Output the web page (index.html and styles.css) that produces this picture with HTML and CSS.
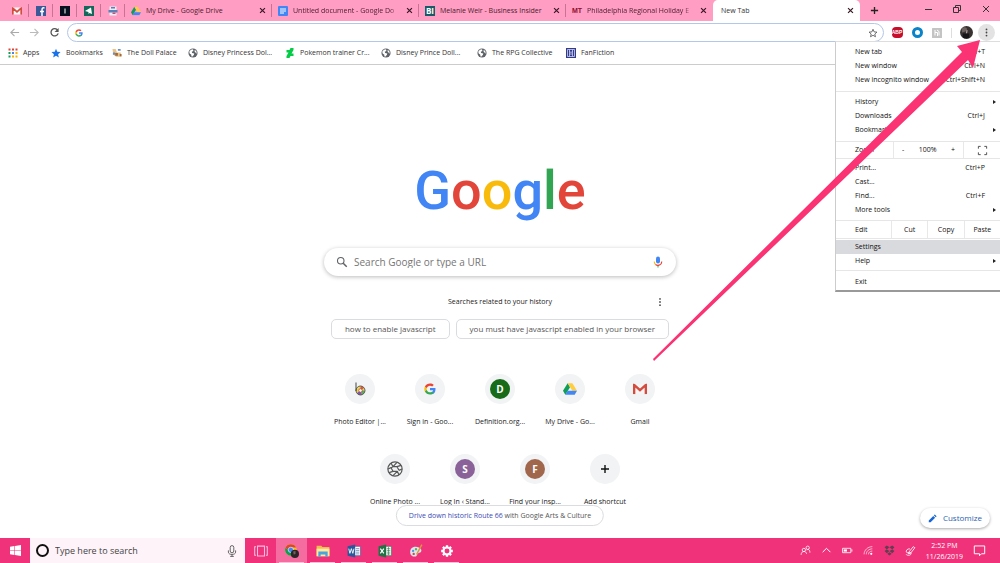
FILE: index.html
```html
<!DOCTYPE html>
<html lang="en">
<head>
<meta charset="utf-8">
<title>New Tab</title>
<link rel="stylesheet" href="styles.css">
</head>
<body>
<svg class="defs" aria-hidden="true">
  <symbol id="google-g" viewBox="0 0 48 48">
    <path fill="#4285f4" d="M46 24.5c0-1.600-.2-3.100-.4-4.500H24v9h12.400c-.6 3-2.200 5.300-4.600 6.900v5.800h7.500C43.600 37.800 46 31.800 46 24.500z"/>
    <path fill="#34a853" d="M24 46c6 0 11.400-2 15.200-5.400l-7.400-5.700c-2 1.400-4.700 2.200-7.800 2.200-5.900 0-10.900-4-12.700-9.300H3.700v5.900C7.500 41 15.200 46 24 46z"/>
    <path fill="#fbbc05" d="M11.300 28.200c-1-2.800-1-5.700 0-8.500v-5.800H3.700c-3.200 6.400-3.200 13.800 0 20.200z"/>
    <path fill="#ea4335" d="M24 10.800c3.300 0 6.200 1.100 8.500 3.300l6.500-6.300C35 4 30 2 24 2 15.400 2 7.500 7 3.700 14.300l7.600 5.600C13.100 14.600 18.100 10.800 24 10.800z"/>
  </symbol>
  <symbol id="drive" viewBox="0 0 24 22">
    <path fill="#0f9d58" d="M8 1 0 14l4 7 8-13z"/>
    <path fill="#ffcd40" d="M8 1h8l8 13h-8z"/>
    <path fill="#4285f4" d="M8 14h16l-4 7H4z"/>
  </symbol>
  <symbol id="gmail" viewBox="0 0 24 18">
    <path fill="#f5f5f5" d="M2 0h20v18H2z"/>
    <path fill="none" stroke="#d54b3d" stroke-width="4" d="M2 18V2l10 9 10-9v16"/>
  </symbol>
  <symbol id="globe" viewBox="0 0 24 24">
    <circle cx="12" cy="12" r="11" fill="#5f6368"/>
    <path fill="#fff" d="M3 9c2-4 6-6 9-6l1 4-4 2 1 3 5 1-1 4-4 4-2-1v-4L4 13zM16 4l4 4 1 6-3-3-2-2z"/>
  </symbol>
  <symbol id="close" viewBox="0 0 10 10">
    <path stroke="currentColor" stroke-width="1.700" d="m1.500 1.500 7 7m0-7-7 7"/>
  </symbol>
  <symbol id="mic" viewBox="0 0 24 24">
    <path fill="#4285f4" d="M12 15a4 4 0 0 0 4-4V5a4 4 0 0 0-8 0v6a4 4 0 0 0 4 4z"/>
    <path fill="#34a853" d="M11 18h2v5h-2z"/>
    <path fill="none" stroke="#fbbc05" stroke-width="2.200" d="M4.500 11c0 3 1 4.500 2.500 6"/>
    <path fill="none" stroke="#ea4335" stroke-width="2.200" d="M7 17c3 2.500 12 3 12.500-6"/>
  </symbol>
</svg>

<div class="window">
  <header class="tabstrip">
    <div class="pinned"><svg class="fav" viewBox="0 0 24 18"><use href="#gmail"/></svg></div>
    <div class="pinned"><svg class="fav" viewBox="0 0 20 20"><rect width="20" height="20" fill="#3b5998"/><path fill="none" stroke="#fff" stroke-width="3" d="M17 4c-4-1-5 0-5 4v12M8 11h8"/></svg></div>
    <div class="pinned"><svg class="fav" viewBox="0 0 20 20"><rect width="20" height="20" fill="#07101f"/><path stroke="#fff" stroke-width="2" d="M10 5v10"/></svg></div>
    <div class="pinned"><svg class="fav" viewBox="0 0 20 20"><rect width="20" height="20" fill="#14685b"/><path fill="#fff" d="M2 10 14 3l2 13-5-2-2 2v-4z"/></svg></div>
    <div class="pinned"><svg class="fav" viewBox="0 0 20 20"><path fill="#e9edf5" d="M3 1h14v18H3z"/><path fill="#5b80b8" d="M1 8h18v5H1zM6 2h8v3H6z"/><path fill="#c44e70" d="M9 13h6v3H9z"/></svg></div>
    <div class="tab"><svg class="fav" viewBox="0 0 24 22"><use href="#drive"/></svg><span class="tab-title">My Drive - Google Drive</span><button class="close" aria-label="Close tab"><svg viewBox="0 0 10 10"><use href="#close"/></svg></button></div>
    <div class="tab"><svg class="fav" viewBox="0 0 20 20"><rect width="20" height="20" rx="2" fill="#4285f4"/><path stroke="#fff" stroke-width="2" d="M4 6h12M4 10h12M4 14h8"/></svg><span class="tab-title fade">Untitled document - Google Do</span><button class="close" aria-label="Close tab"><svg viewBox="0 0 10 10"><use href="#close"/></svg></button></div>
    <div class="tab"><span class="fav badge-bi">BI</span><span class="tab-title">Melanie Weir - Business Insider</span><button class="close" aria-label="Close tab"><svg viewBox="0 0 10 10"><use href="#close"/></svg></button></div>
    <div class="tab last"><span class="fav badge-mt">MT</span><span class="tab-title fade">Philadelphia Regional Holiday E</span><button class="close" aria-label="Close tab"><svg viewBox="0 0 10 10"><use href="#close"/></svg></button></div>
    <div class="tab active"><span class="tab-title">New Tab</span><button class="close" aria-label="Close tab"><svg viewBox="0 0 10 10"><use href="#close"/></svg></button></div>
    <button class="new-tab" aria-label="New tab"><svg viewBox="0 0 10 10"><path stroke="#222" stroke-width="1.500" d="M5 1v8M1 5h8"/></svg></button>
    <div class="window-buttons">
      <button aria-label="Minimize"><svg viewBox="0 0 10 10"><path stroke="#333" d="M2 5.500h7"/></svg></button>
      <button aria-label="Restore"><svg viewBox="0 0 10 10"><path fill="none" stroke="#333" d="M1.500 3.500h5v5h-5zM3.500 3.500v-2h5v5h-2"/></svg></button>
      <button aria-label="Close"><svg viewBox="0 0 10 10"><path stroke="#333" d="m2 2 6 6m0-6L2 8"/></svg></button>
    </div>
  </header>

  <div class="toolbar">
    <button class="nav" aria-label="Back"><svg viewBox="0 0 12 12"><path fill="none" stroke="#aaa" stroke-width="1.200" d="M11 6H2m4-4L2 6l4 4"/></svg></button>
    <button class="nav" aria-label="Forward"><svg viewBox="0 0 12 12"><path fill="none" stroke="#bbb" stroke-width="1.200" d="M1 6h9M6 2l4 4-4 4"/></svg></button>
    <button class="nav" aria-label="Reload"><svg viewBox="0 0 12 12"><path fill="none" stroke="#555" stroke-width="1.400" d="M9.500 3.500A4 4 0 1 0 10 7"/><path fill="#555" d="M10.500 1v4.500H6z"/></svg></button>
    <div class="omnibox">
      <svg class="omni-g" viewBox="0 0 48 48"><use href="#google-g"/></svg>
      <input type="text" aria-label="Address bar">
      <button class="star" aria-label="Bookmark this page"><svg viewBox="0 0 24 24"><path fill="none" stroke="#555" stroke-width="2" d="m12 3 2.700 6.300 6.800.6-5.200 4.500 1.600 6.600-5.900-3.500L6.100 21l1.600-6.600L2.500 9.900l6.800-.6z"/></svg></button>
    </div>
    <button class="ext" aria-label="Adblock Plus"><span class="abp">ABP</span></button>
    <button class="ext" aria-label="Extension"><span class="ring"></span></button>
    <button class="ext" aria-label="Honey"><svg viewBox="0 0 20 20"><rect width="20" height="20" rx="1" fill="#c4c4c4"/><path fill="none" stroke="#fff" stroke-width="2" d="M6 4v11M6 9h5v7M10 4l4 3v8"/></svg></button>
    <span class="divider"></span>
    <button class="profile" aria-label="Profile"><svg viewBox="0 0 24 24"><circle cx="12" cy="12" r="12" fill="#383232"/><path fill="#6d6260" d="M3 5c5-4 9-3 10 1l-3 4-6 2z"/><path fill="#b9a9a4" d="m12 7 2 1-1 6h-2z"/><path fill="#161416" d="M5 14h12v7a12 12 0 0 1-12 0z"/></svg></button>
    <button class="kebab" aria-label="Chrome menu"><svg viewBox="0 0 16 16"><g fill="#444"><circle cx="8" cy="3.500" r="1.300"/><circle cx="8" cy="8" r="1.300"/><circle cx="8" cy="12.500" r="1.300"/></g></svg></button>
  </div>

  <nav class="bookmarks" aria-label="Bookmarks">
    <a href="#"><svg viewBox="0 0 20 20"><path fill="#db4437" d="M1 1h4v4H1zM8 1h4v4H8zM15 1h4v4h-4z"/><path fill="#0f9d58" d="M1 8h4v4H1z"/><path fill="#4285f4" d="M8 8h4v4H8z"/><path fill="#f4b400" d="M15 8h4v4h-4zM8 15h4v4H8zM15 15h4v4h-4z"/><path fill="#0f9d58" d="M1 15h4v4H1z"/></svg><span>Apps</span></a>
    <a href="#"><svg viewBox="0 0 24 24"><path fill="#1a73e8" d="m12 2 3 7 8 .7-6 5.300 1.800 8L12 18.800 5.200 23 7 15 1 9.700 9 9z"/></svg><span>Bookmarks</span></a>
    <a href="#"><svg viewBox="0 0 22 20"><path fill="#e8c48b" d="M1 1h7l3 8h8l2 9H9L3 14z"/><path fill="#6c8fc2" d="M13 1h6v4h-6zM2 9h5v5H2z"/><path fill="#a06a3c" d="M7 10h6v6H7zM17 12h4v5h-4z"/></svg><span>The Doll Palace</span></a>
    <a href="#"><svg viewBox="0 0 24 24"><use href="#globe"/></svg><span>Disney Princess Dol...</span></a>
    <a href="#"><svg viewBox="0 0 20 20"><path fill="#05cc47" d="M17 0v4l-4 7h4v5h-6l-2 4H3v-4l4-7H3V4h6l2-4z"/></svg><span>Pokemon trainer Cr...</span></a>
    <a href="#"><svg viewBox="0 0 24 24"><use href="#globe"/></svg><span>Disney Prince Doll...</span></a>
    <a href="#"><svg viewBox="0 0 24 24"><use href="#globe"/></svg><span>The RPG Collective</span></a>
    <a href="#"><svg viewBox="0 0 20 20"><rect width="20" height="20" fill="#333c8c"/><path fill="none" stroke="#d9dcf3" stroke-width="1.500" d="M3 3h14v14H3zM7 3v14M13 3v14M7 7l3 2 3-2M7 12h6"/></svg><span>FanFiction</span></a>
  </nav>

  <main class="page">
    <h1 class="logo" aria-label="Google"><span class="b">G</span><span class="r">o</span><span class="y">o</span><span class="b">g</span><span class="g">l</span><span class="r">e</span></h1>
    <form class="search" role="search">
      <svg class="lens" viewBox="0 0 24 24"><circle cx="9.500" cy="9.500" r="6.500" fill="none" stroke="#5f6368" stroke-width="2.200"/><path stroke="#5f6368" stroke-width="3" d="m14.500 14.500 7 7"/></svg>
      <input type="text" placeholder="Search Google or type a URL" aria-label="Search Google or type a URL">
      <button type="button" aria-label="Search by voice"><svg viewBox="0 0 24 24"><use href="#mic"/></svg></button>
    </form>
    <div class="related">
      <span>Searches related to your history</span>
      <button aria-label="More"><svg viewBox="0 0 16 16"><g fill="#555"><circle cx="8" cy="3" r="1.500"/><circle cx="8" cy="8" r="1.500"/><circle cx="8" cy="13" r="1.500"/></g></svg></button>
    </div>
    <div class="chips">
      <a href="#">how to enable javascript</a>
      <a href="#">you must have javascript enabled in your browser</a>
    </div>
    <div class="tiles">
      <a class="tile" href="#"><span class="disc"><svg viewBox="0 0 24 28"><circle cx="13" cy="17" r="8.500" fill="#f0d44c"/><path fill="#e0524d" d="M13 17V8.500A8.500 8.500 0 0 1 20 12z"/><path fill="#58ad62" d="M13 17h8.500a8.500 8.500 0 0 1-5 8z"/><path fill="#7958b5" d="m13 17 3 8a8.500 8.500 0 0 1-10-3z"/><circle cx="13" cy="17" r="3.500" fill="#fff" stroke="#a44" stroke-width="1.500"/><circle cx="13" cy="17" r="9" fill="none" stroke="#333" stroke-width="1.500"/><path stroke="#333" stroke-width="1.800" d="M4 1v17"/></svg></span><span>Photo Editor |...</span></a>
      <a class="tile" href="#"><span class="disc"><svg class="small" viewBox="0 0 48 48"><use href="#google-g"/></svg></span><span>Sign in - Goo...</span></a>
      <a class="tile" href="#"><span class="disc"><span class="letter green">D</span></span><span>Definition.org...</span></a>
      <a class="tile" href="#"><span class="disc"><svg viewBox="0 0 24 22"><use href="#drive"/></svg></span><span>My Drive - Go...</span></a>
      <a class="tile" href="#"><span class="disc"><svg viewBox="0 0 24 18"><use href="#gmail"/></svg></span><span>Gmail</span></a>
      <a class="tile" href="#"><span class="disc"><svg class="wide" viewBox="0 0 24 24"><g fill="none" stroke="#555" stroke-width="1.800"><circle cx="12" cy="12" r="10.700"/><path d="M9 8.500 6 3M9 8.500l6-6.500M15 8.500l-6 0M15 8.500l6-2M15 8.500l3 5.500M18 14l-3-5.500M18 14l4.500-2M15.500 15.500 18 21M15.500 15.500 9 22M15.500 15.500H9M9 15.500l-6 2M9 15.500 6 10M6 10l-4.500 2M6 10l3-1.500"/></g></svg></span><span>Online Photo ...</span></a>
      <a class="tile" href="#"><span class="disc"><span class="letter purple">S</span></span><span>Log In ‹ Stand...</span></a>
      <a class="tile" href="#"><span class="disc"><span class="letter brown">F</span></span><span>Find your insp...</span></a>
      <button class="tile"><span class="disc"><svg viewBox="0 0 14 14"><path stroke="#111" stroke-width="1.400" d="M7 3v8M3 7h8"/></svg></span><span>Add shortcut</span></button>
    </div>
    <p class="promo"><a href="#">Drive down historic Route 66</a> with Google Arts &amp; Culture</p>
    <button class="customize"><svg viewBox="0 0 24 24"><path fill="#1967d2" d="M2 22v-5L14 5l5 5L7 22zM15.500 3.500 18 1l5 5-2.500 2.500z"/></svg>Customize</button>
  </main>

  <footer class="taskbar">
    <button class="start" aria-label="Start"><svg viewBox="0 0 20 20"><path fill="#fff" d="M0 3l8-1v7H0zM9 2l11-2v9H9zM0 10h8v8l-8-1zM9 10h11v10L9 18z"/></svg></button>
    <div class="cortana">
      <span class="circle"></span>
      <input type="text" placeholder="Type here to search" aria-label="Type here to search">
      <svg viewBox="0 0 16 20"><g fill="none" stroke="#555" stroke-width="1.500"><rect x="5" y="1" width="6" height="12" rx="3"/><path d="M2 9v3c0 5 12 5 12 0V9M8 16v3M5 19h6"/></g></svg>
    </div>
    <div class="apps">
      <button aria-label="Task view"><svg viewBox="0 0 20 20"><path fill="none" stroke="#fbd" stroke-width="1.500" d="M5 3h10v14H5zM3 4H1v12h2M17 4h2v12h-2"/></svg></button>
      <button class="run current" aria-label="Chrome"><svg viewBox="0 0 24 24"><circle cx="10" cy="10" r="10" fill="#fbc116"/><path fill="#db4437" d="M1 6a10 10 0 0 1 18 0H10l-4 6z"/><path fill="#0f9d58" d="M1 6a10 10 0 0 0 9 14l4-8H6z"/><circle cx="10" cy="10" r="4.500" fill="#4285f4" stroke="#fff"/><circle cx="17" cy="17" r="7" fill="#2c2628"/><path fill="#75605d" d="m14 13 4-1v5l-3 1z"/></svg></button>
      <button class="run" aria-label="File Explorer"><svg viewBox="0 0 24 24"><path fill="#f0c04c" d="M1 3h8l2 2h12v16H1z"/><path fill="#ffe9a0" d="M1 8h22v13H1z"/><path fill="#4ba3dc" d="M4 13h16v9h-4v-4H8v4H4z"/></svg></button>
      <button class="run" aria-label="Word"><svg viewBox="0 0 24 24"><path fill="#fff" stroke="#2b579a" d="M12 4h11v16H12z"/><path stroke="#2b579a" d="M15 8h6M15 11h6M15 14h6M15 17h6"/><path fill="#2b579a" d="m1 4 13-3v22L1 20z"/><path fill="none" stroke="#fff" stroke-width="1.500" d="m3 8 2 8 2.500-8 2.500 8 2-8"/></svg></button>
      <button class="run" aria-label="Excel"><svg viewBox="0 0 24 24"><path fill="#fff" stroke="#217346" d="M12 4h11v16H12z"/><path stroke="#217346" d="M15 8h6M15 11h6M15 14h6M15 17h6M18 5v14"/><path fill="#217346" d="m1 4 13-3v22L1 20z"/><path fill="none" stroke="#fff" stroke-width="2" d="m4 8 6 8m0-8-6 8"/></svg></button>
      <button class="run" aria-label="Paint"><svg viewBox="0 0 24 24"><path fill="#dfe5ec" d="M2 14C2 6 10 3 17 6c6 3 5 8 1 9s-3 2-5 5-11 2-11-6z"/><circle cx="7" cy="12" r="2" fill="#4c9be0"/><circle cx="12" cy="9" r="2" fill="#52b35a"/><circle cx="8" cy="17" r="2" fill="#d8483c"/><path stroke="#d69a3c" stroke-width="2.500" d="m22 1-9 17"/></svg></button>
      <button class="run" aria-label="Settings"><svg viewBox="0 0 24 24"><circle cx="12" cy="12" r="6" fill="none" stroke="#fff" stroke-width="3.500"/><path stroke="#fff" stroke-width="4" d="M12 2v4M12 18v4M2 12h4M18 12h4M5 5l2.500 2.500M16.500 16.500 19 19M5 19l2.500-2.500M16.500 7.500 19 5"/></svg></button>
    </div>
    <div class="tray">
      <svg viewBox="0 0 20 20"><g fill="none" stroke="#fff" stroke-width="1.400"><circle cx="7" cy="9" r="3"/><path d="M2 18c0-8 9-8 10-2"/><circle cx="14" cy="5" r="3"/><path d="M12 9c4-2 6 0 6 5"/></g></svg>
      <svg viewBox="0 0 20 20"><path fill="none" stroke="#fff" stroke-width="1.800" d="m3 13 7-7 7 7"/></svg>
      <svg viewBox="0 0 20 20"><path fill="none" stroke="#fff" stroke-width="1.500" d="M1 6h15v8H1zM18 8v4"/><path fill="#fff" d="M3 8h6v4H3z"/></svg>
      <svg viewBox="0 0 20 20"><g fill="none" stroke="#fcd" stroke-width="1.500"><path d="M2 17C2 9 9 3 17 3M6 17c0-6 5-10 11-10M10 17c0-4 3-6 7-6"/></g><circle cx="15" cy="16" r="2" fill="#fff"/></svg>
      <svg viewBox="0 0 20 20"><path fill="#613e50" d="m5 1 5 3-5 4-4-4zM15 1l4 3-4 4-5-4zM1 11l4-3 5 3-5 4zM19 11l-4-3-5 3 5 4zM10 13l4 3-4 3-4-3z"/></svg>
      <svg viewBox="0 0 20 20"><path fill="none" stroke="#fff" stroke-width="1.500" d="m7 13 8-10 3 2-8 10-4 1zM9 7C3 6 0 13 4 14s8-2 7 2-8 3-9 1"/></svg>
      <div class="clock"><span>2:52 PM</span><span>11/26/2019</span></div>
      <svg class="action" viewBox="0 0 20 20"><path fill="none" stroke="#fff" stroke-width="1.500" d="M2 3h16v12h-5l-3 3v-3H2z"/></svg>
    </div>
  </footer>

  <div class="menu" role="menu">
    <div class="group">
      <button class="item"><span>New tab</span><kbd>Ctrl+T</kbd></button>
      <button class="item"><span>New window</span><kbd>Ctrl+N</kbd></button>
      <button class="item"><span>New incognito window</span><kbd>Ctrl+Shift+N</kbd></button>
    </div>
    <div class="group">
      <button class="item sub"><span>History</span></button>
      <button class="item"><span>Downloads</span><kbd>Ctrl+J</kbd></button>
      <button class="item sub"><span>Bookmarks</span></button>
    </div>
    <div class="row zoom">
      <span class="row-label">Zoom</span>
      <div class="stepper"><button aria-label="Zoom out">-</button><span>100%</span><button aria-label="Zoom in">+</button></div>
      <button class="full" aria-label="Full screen"><svg viewBox="0 0 12 12"><path fill="none" stroke="#444" d="M1.500 4V1.500H4M8 1.500h2.500V4M10.500 8v2.500H8M4 10.500H1.500V8"/></svg></button>
    </div>
    <div class="group tight">
      <button class="item"><span>Print...</span><kbd>Ctrl+P</kbd></button>
      <button class="item"><span>Cast...</span></button>
      <button class="item"><span>Find...</span><kbd>Ctrl+F</kbd></button>
      <button class="item sub"><span>More tools</span></button>
    </div>
    <div class="row edit">
      <span class="row-label">Edit</span>
      <button>Cut</button><button>Copy</button><button>Paste</button>
    </div>
    <div class="group snug">
      <button class="item selected"><span>Settings</span></button>
      <button class="item sub"><span>Help</span></button>
    </div>
    <div class="group">
      <button class="item"><span>Exit</span></button>
    </div>
  </div>

  <svg class="pointer" viewBox="0 0 330 325" aria-hidden="true"><path fill="#fb3273" d="M1 319 310 12l-5-6 23-6-7 28-5-8L2 321z"/></svg>
</div>
</body>
</html>
```
FILE: styles.css
```css
* { box-sizing: border-box; }

body {
  margin: 0;
  font-family: "Open Sans", "Noto Sans", sans-serif;
  font-size: 7px;
  line-height: 12px;
  color: #222;
}

button, input, kbd { font: inherit; color: inherit; }
button { border: 0; padding: 0; background: none; display: flex; align-items: center; justify-content: center; }
input { border: 0; padding: 0; background: none; outline: 0; min-width: 0; flex: 1; }
a { color: inherit; text-decoration: none; }
svg { display: block; flex: none; }
.defs { position: absolute; width: 0; height: 0; }

.window {
  position: relative;
  display: flex;
  flex-direction: column;
  min-height: 100vh;
  overflow: hidden;
  background: #fff;
}

/* Tabs */
.tabstrip { display: flex; height: 21px; padding-left: 5px; background: #ff9ec2; }
.pinned {
  display: flex; align-items: center; justify-content: center;
  width: 24px;
  background: linear-gradient(#c97394, #c97394) right center / 1px 13px no-repeat;
}
.fav { width: 10px; height: 10px; flex: none; }
.tab {
  display: flex; align-items: center; gap: 5px;
  flex: 0 1 147px; min-width: 0;
  padding: 0 6px 0 6px;
  color: #4a1c2e;
  background: linear-gradient(#c97394, #c97394) right center / 1px 13px no-repeat;
}
.tab.last { background: none; }
.tab.active { background: #fff; border-radius: 5px 5px 0 0; color: #333; padding-left: 8px; }
.tab-title { flex: 1; overflow: hidden; white-space: nowrap; }
.fade { mask-image: linear-gradient(to right, #000 90%, transparent); }
.close { width: 8px; height: 12px; color: #3a1826; }
.close svg { width: 7px; height: 7px; }
.badge-bi { background: #175b68; color: #fff; font-size: 8px; line-height: 10px; font-weight: 700; text-align: center; }
.badge-mt { color: #8e0d2d; font: 700 7px/10px "Liberation Sans", sans-serif; text-align: center; }
.new-tab { width: 28px; }
.new-tab svg { width: 9px; height: 9px; }
.window-buttons { display: flex; margin-left: auto; }
.window-buttons button { width: 29px; height: 18px; }
.window-buttons svg { width: 10px; height: 10px; }

/* Toolbar */
.toolbar { display: flex; align-items: center; height: 23px; padding: 0 5px 0 4px; }
.nav { width: 20px; height: 20px; }
.nav svg { width: 11px; height: 11px; }
.omnibox {
  display: flex; align-items: center; flex: 1;
  height: 19px; margin: 0 3px; padding: 0 5px 0 7px;
  border: 1px solid #b3c7e8; border-radius: 10px;
}
.omni-g { width: 8px; height: 8px; }
.star svg { width: 10px; height: 10px; }
.ext { width: 20px; }
.ext svg { width: 10px; height: 10px; }
.abp { width: 11px; height: 11px; border-radius: 4px; background: #c70d2c; color: #fff; font: 700 5px/11px "Liberation Sans", sans-serif; }
.ring { width: 11px; height: 11px; border: 3px solid #0b83c9; border-radius: 50%; }
.divider { width: 1px; height: 10px; margin: 0 4px; background: #ddd; }
.profile { width: 20px; }
.profile svg { width: 13px; height: 13px; }
.kebab { width: 17px; height: 17px; margin-left: 2px; border-radius: 50%; background: #e3e3e3; }
.kebab svg { width: 11px; height: 11px; }

/* Bookmarks */
.bookmarks {
  display: grid;
  grid-template-columns: 43px 61px 76px 97px 96px 96px 89px auto;
  align-items: center;
  height: 21px; padding: 0 0 3px 8px;
  border-bottom: 1px solid #ccc;
}
.bookmarks a { display: flex; align-items: center; gap: 5px; white-space: nowrap; color: #333; }
.bookmarks svg { width: 10px; height: 10px; }

/* New tab page */
.page {
  position: relative;
  display: flex; flex-direction: column; align-items: center;
  flex: 1; padding-top: 90px;
}
.logo { margin: 0; font: 500 54px/72px Roboto, sans-serif; }
.b { color: #4285f4; }
.r { color: #e2453a; }
.y { color: #f8bb0c; }
.g { color: #32a553; }
.search {
  display: flex; align-items: center; gap: 6px;
  width: 352px; height: 28px; margin-top: 21px; padding: 0 12px;
  border-radius: 14px; box-shadow: 0 1px 4px #bbb;
  font-size: 10px;
}
.search input::placeholder { color: #757575; opacity: 1; }
.lens { width: 12px; height: 12px; }
.search button svg { width: 12px; height: 12px; }
.related {
  display: grid; grid-template-columns: 1fr auto 1fr; align-items: center;
  width: 330px; margin-top: 20px;
}
.related span { grid-column: 2; }
.related button { justify-self: end; }
.related svg { width: 10px; height: 10px; }
.chips { display: flex; gap: 6px; margin-top: 11px; }
.chips a { padding: 0 13px; border: 1px solid #dadce0; border-radius: 5px; line-height: 18px; font-size: 8px; color: #555; }
.tiles { display: flex; flex-wrap: wrap; justify-content: center; width: 350px; margin-top: 35px; row-gap: 27px; }
.tile { display: flex; flex-direction: column; align-items: center; gap: 12px; width: 70px; line-height: 11px; font-weight: 500; white-space: nowrap; }
.disc { display: flex; align-items: center; justify-content: center; width: 30px; height: 30px; border-radius: 50%; background: #f1f3f4; }
.disc svg { width: 14px; height: 14px; }
.disc .small { width: 12px; height: 12px; }
.disc .wide { width: 16px; height: 16px; }
.letter { width: 20px; border-radius: 50%; color: #fff; font-size: 10px; line-height: 20px; font-weight: 700; text-align: center; }
.green { background: #176b19; }
.purple { background: #8a6199; }
.brown { background: #a0674d; }
.promo {
  position: absolute; bottom: 12px; left: 50%; transform: translateX(-50%);
  margin: 0; padding: 0 12px;
  border: 1px solid #dadce0; border-radius: 11px; background: #fff;
  line-height: 19px; white-space: nowrap; color: #555;
}
.promo a { color: #3c4bb5; }
.customize {
  position: absolute; right: 10px; bottom: 10px;
  gap: 6px; height: 20px; padding: 0 8px;
  border-radius: 10px; background: #fff; box-shadow: 0 1px 3px #aaa;
  font-size: 8px; color: #2b62b0;
}
.customize svg { width: 9px; height: 9px; }

/* Taskbar */
.taskbar { display: flex; height: 25px; background: #f0327b; color: #fff; }
.start { width: 30px; }
.start svg { width: 11px; height: 11px; }
.cortana { display: flex; align-items: center; gap: 6px; width: 215px; padding: 0 8px 0 6px; background: #fdf3f8; color: #444; font-size: 9px; }
.cortana input::placeholder { color: #444; opacity: 1; }
.circle { width: 13px; height: 13px; border: 2px solid #111; border-radius: 50%; }
.cortana svg { width: 10px; height: 12px; }
.apps { display: flex; }
.apps button { width: 31px; }
.apps svg { width: 14px; height: 14px; }
.run { background: linear-gradient(#ffc4da, #ffc4da) center bottom / 25px 1px no-repeat; }
.apps .current { background-color: #f56ca0; }
.tray { display: flex; align-items: center; gap: 10px; margin-left: auto; padding-right: 14px; }
.tray svg { width: 11px; height: 11px; }
.clock { display: flex; flex-direction: column; align-items: center; line-height: 11px; }
.tray .action { width: 13px; height: 13px; }

/* Chrome menu */
.menu {
  position: absolute; top: 41px; right: 0;
  width: 165px;
  border-left: 1px solid #ccc; border-top: 1px solid #ddd; border-bottom: 2px solid #999;
  background: #fff; color: #111;
}
.group { padding: 3px 0 4px; border-bottom: 1px solid #e6e6e6; }
.group.tight { padding: 2px 0 3px; }
.group.snug { padding: 1px 0 2px; }
.group:last-child { padding: 4px 0 1px; border: 0; }
.item { width: 100%; height: 14px; padding: 0 15px 0 19px; justify-content: space-between; white-space: nowrap; }
.sub { padding-right: 4px; }
.sub::after { content: ""; border: 2px solid transparent; border-left: 3px solid #222; border-right: 0; }
.selected { background: #d9dadd; }
.row { display: flex; height: 18px; border-bottom: 1px solid #e6e6e6; }
.row-label { width: 57px; padding-left: 19px; line-height: 17px; }
.row button, .stepper { border-left: 1px solid #e8e8e8; }
.stepper { display: flex; align-items: center; justify-content: space-between; width: 70px; padding: 0 8px; }
.row .stepper button { border: 0; }
.zoom { height: 17px; }
.zoom .row-label { line-height: 16px; }
.full { flex: 1; }
.full svg { width: 11px; height: 11px; }
.edit .row-label { width: 55px; }
.edit button { flex: 1; }

.pointer { position: absolute; top: 40px; right: 18px; width: 330px; height: 325px; pointer-events: none; }
```
